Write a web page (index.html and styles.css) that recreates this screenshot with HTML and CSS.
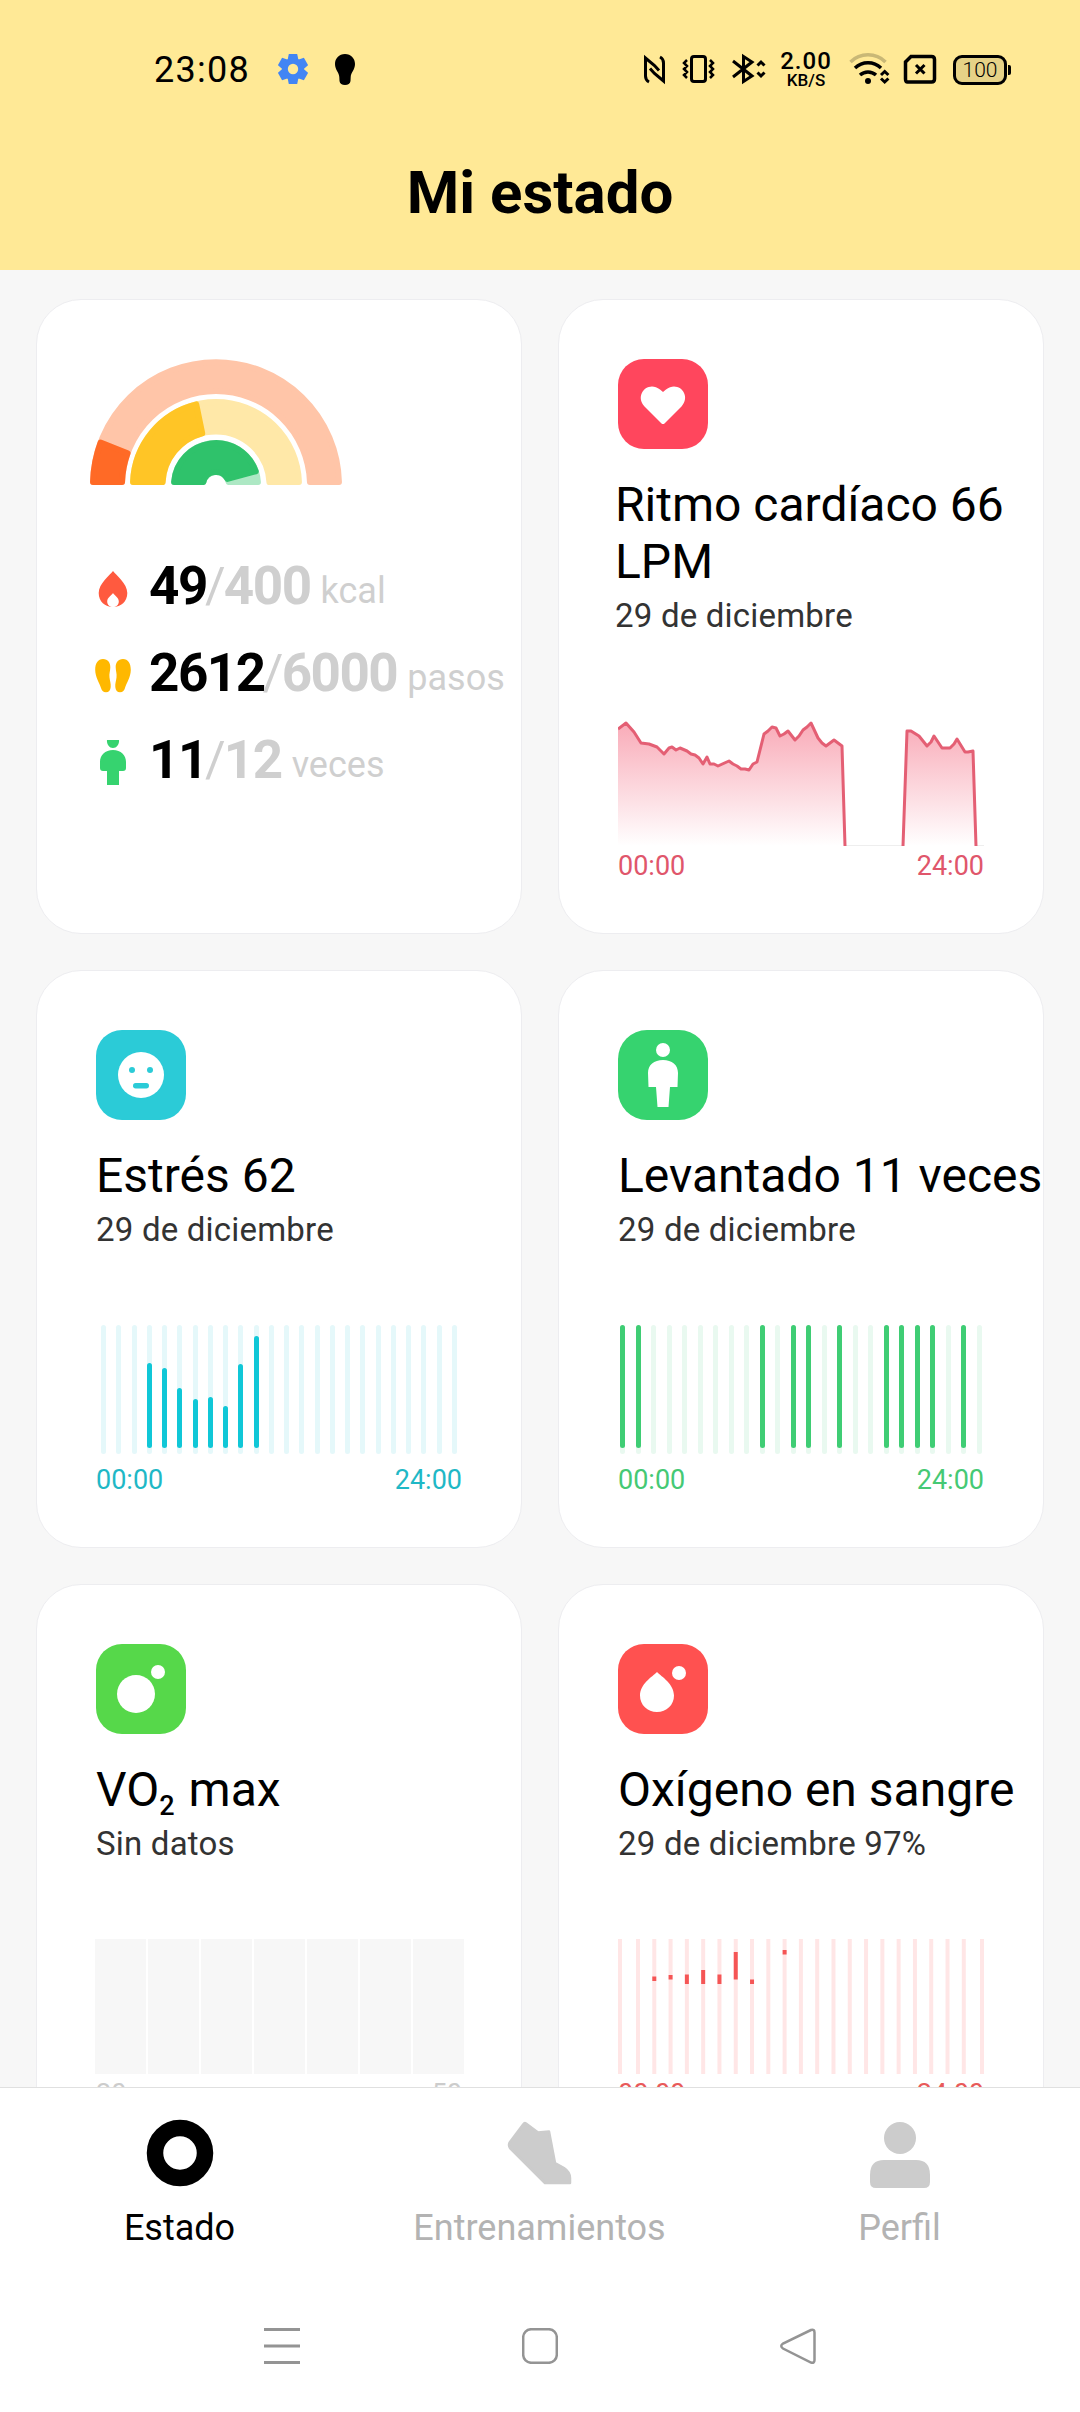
FILE: index.html
```
<!DOCTYPE html>
<html lang="es">
  <head>
    <meta charset="utf-8">
    <title>Mi estado</title>
    <link rel="stylesheet" href="styles.css">
  </head>
  <body>
    <div id="top">
      <div class="statusbar">
        <div class="status-left">
          <span class="clock">23:08</span>
          <svg class="gear" width="30" height="30" viewBox="-15 -15 30 30">
            <g fill="#4285f4">
              <circle r="11"/>
              <path id="tooth" d="M-4.2 -15h8.4l1.2 6h-10.8z"/>
              <use href="#tooth" transform="rotate(60)"/>
              <use href="#tooth" transform="rotate(120)"/>
              <use href="#tooth" transform="rotate(180)"/>
              <use href="#tooth" transform="rotate(240)"/>
              <use href="#tooth" transform="rotate(300)"/>
            </g>
            <circle r="5.2" fill="#ffe996"/>
          </svg>
          <svg width="20" height="31" viewBox="0 0 20 31"><path d="M10 0C4 0 0 4.500 0 10c0 6 4 8 4.300 13L4.500 27c.2 2.500 2.500 4 5.500 4s5.300-1.500 5.500-4l.2-4C16 18 20 16 20 10 20 4.500 16 0 10 0z"/></svg>
        </div>
        <div class="status-right">
          <svg width="38" height="40" viewBox="640 50 38 40" fill="none" stroke="#000" stroke-width="3">
            <path d="M649 82c-2-1-3.500-3-3.500-6V58l9 7.500 4.500 5M660 57c2 1 3.500 3 3.500 6v18l-9-7.500-4.500-5"/>
          </svg>
          <svg width="50" height="40" viewBox="678 50 50 40" fill="none" stroke="#000">
            <rect x="691.500" y="56.500" width="14" height="25" rx="2.500" stroke-width="3"/>
            <path d="M687 60l-3 3 3 3-3 3 3 3-3 3 3 3M710 60l3 3-3 3 3 3-3 3 3 3-3 3" stroke-width="2.500"/>
          </svg>
          <svg width="50" height="40" viewBox="728 50 50 40" fill="none" stroke="#000" stroke-width="3">
            <path d="M733 61l19 15-8.500 5.500v-25L752 62l-19 15"/>
            <path d="M757.500 65.500l3.500-3.500 3.500 3.500M757.500 72.500l3.500 3.500 3.500-3.500"/>
          </svg>
          <div class="speed"><span class="speed-num">2.00</span><span class="speed-unit">KB/S</span></div>
          <svg width="60" height="40" viewBox="836 50 60 40" fill="none" stroke="#000" stroke-width="3.500">
            <path d="M850.500 62a25 25 0 0 1 35 0" stroke="#c9b876"/>
            <path d="M855 68a19 19 0 0 1 26 0M860 75a12 12 0 0 1 16 0"/>
            <circle cx="868" cy="81" r="3" fill="#000" stroke="none"/>
            <path d="M881 75l3.700-3.500 3.700 3.500M881 78.500l3.700 3.500 3.700-3.500" stroke-width="3"/>
          </svg>
          <svg width="50" height="40" viewBox="896 50 50 40" fill="none" stroke="#000" stroke-width="3.500">
            <path d="M911 56.500h20.500q3 0 3 3v19.500q0 3-3 3h-24q-2 0-2-3V62z"/>
            <path d="M916 65l8.500 8.500M924.500 65l-8.500 8.500" stroke-width="3"/>
          </svg>
          <div class="battery">100</div>
          <div class="battery-tip"></div>
        </div>
      </div>
      <h1>Mi estado</h1>
    </div>

    <div id="content">
      <div class="card">
        <svg class="rainbow" width="252" height="126" viewBox="-126 -126 252 126">
          <g id="arcs"></g>
        </svg>
        <div class="stat">
          <svg width="36" height="45" viewBox="0 0 36 45"><path d="M18 5c3 4 14.300 12.500 14.300 22C32.300 35.500 26 41 18 41S3.700 35.500 3.700 27C3.700 17.500 15 9 18 5z" fill="#ff5a3f"/><path d="M18 27c1.500 2.500 5.800 4.500 5.800 8.500 0 3.500-2.500 5.500-5.800 5.500s-5.800-2-5.800-5.500c0-4 4.300-6 5.800-8.500z" fill="#fff"/></svg>
          <b>49</b><i>/</i><b class="goal">400</b><span>kcal</span>
        </div>
        <div class="stat">
          <svg width="36" height="45" viewBox="0 0 36 45" fill="#ffb800"><path id="foot" d="M8 6c5 0 7.500 4 7.300 8.500-.1 4-1.300 6-.8 10 .4 3.500 1.500 6 1.200 9.500-.3 3.500-2 5.300-4.700 5.300-3 0-4.200-1.800-5-4.300-1.500-5-5.800-11-5.800-18C.2 10 3 6 8 6z"/><use href="#foot" transform="matrix(-1 0 0 1 36 0)"/></svg>
          <b>2612</b><i>/</i><b class="goal">6000</b><span>pasos</span>
        </div>
        <div class="stat">
          <svg width="36" height="45" viewBox="0 0 36 45" fill="#36d36f"><path d="M12 0h12c.5 4-2 8-6 8s-6.500-4-6-8zM18 10c8 0 13 5 13 12v6q0 3-3 3h-4v14H12V31H8q-3 0-3-3v-6c0-7 5-12 13-12z"/></svg>
          <b>11</b><i>/</i><b class="goal">12</b><span>veces</span>
        </div>
      </div>

      <div class="card">
        <svg class="icon" width="90" height="90" viewBox="0 0 90 90"><rect width="90" height="90" rx="26" fill="#ff465d"/><path d="M43.500 64.500L26.500 47.500C16 36 30 21 42 30.500L45 33l3-2.500C60 21 74 36 63.500 47.500L46.500 64.500q-1.500 1.200-3 0z" fill="#fff"/></svg>
        <div class="shift">
          <h2>Ritmo cardíaco 66<br>LPM</h2>
          <p>29 de diciembre</p>
        </div>
        <svg class="chart" width="366" height="135" viewBox="0 0 366 135">
          <defs><linearGradient id="fade" x1="0" y1="0" x2="0" y2="1"><stop offset="0" stop-color="#f9abb8"/><stop offset="1" stop-color="#fff"/></linearGradient></defs>
          <path d="M226 134.500h140" stroke="#eee"/>
          <path fill="url(#fade)" d="M0 135V18L8 12 16 21 23 32 31 33 39 36 46 43 51 37 54 36 58 39 62 37 69 40 73 43 77 44 81 47 85 53 89 46 92 53 96 53 100 55 111 50 115 53 119 55 123 58 127 58 131 59 135 53 139 51 146 23 150 20 154 16 158 17 162 25 166 23 170 20 177 29 181 25 185 19 189 16 193 12 200 27 204 32 208 35 216 29 224 35 227 135zM285 135L289 20 293 20 301 25 309 35 313 31 316 25 324 37 332 37 336 33 339 28 347 41 350 41 355 40 358 135z"/>
          <path fill="none" stroke="#e45f74" stroke-width="3" stroke-linejoin="round" d="M0 18L8 12 16 21 23 32 31 33 39 36 46 43 51 37 54 36 58 39 62 37 69 40 73 43 77 44 81 47 85 53 89 46 92 53 96 53 100 55 111 50 115 53 119 55 123 58 127 58 131 59 135 53 139 51 146 23 150 20 154 16 158 17 162 25 166 23 170 20 177 29 181 25 185 19 189 16 193 12 200 27 204 32 208 35 216 29 224 35 227 135M285 135L289 20 293 20 301 25 309 35 313 31 316 25 324 37 332 37 336 33 339 28 347 41 350 41 355 40 358 135"/>
        </svg>
        <div class="hours pink"><span>00:00</span><span>24:00</span></div>
      </div>

      <div class="card">
        <svg class="icon" width="90" height="90" viewBox="0 0 90 90"><rect width="90" height="90" rx="26" fill="#2bcbd7"/><circle cx="45" cy="45" r="23" fill="#fff"/><g fill="#2bcbd7"><circle cx="36" cy="40" r="3"/><circle cx="54" cy="40" r="3"/><rect x="37" y="53" width="16" height="5.500" rx="2.700"/></g></svg>
        <h2>Estrés 62</h2>
        <p>29 de diciembre</p>
        <div class="chart bars stress" id="stress"></div>
        <div class="hours cyan"><span>00:00</span><span>24:00</span></div>
      </div>

      <div class="card">
        <svg class="icon" width="90" height="90" viewBox="0 0 90 90"><rect width="90" height="90" rx="29" fill="#36d36f"/><g fill="#fff"><circle cx="45" cy="20" r="7"/><path d="M45 30c9 0 15 5 15 13l-.5 14H52l-1.500 20h-11L38 57h-7.500L30 43c0-8 6-13 15-13z"/></g></svg>
        <h2>Levantado 11 veces</h2>
        <p>29 de diciembre</p>
        <div class="chart bars stand" id="stand"></div>
        <div class="hours green"><span>00:00</span><span>24:00</span></div>
      </div>

      <div class="card">
        <svg class="icon" width="90" height="90" viewBox="0 0 90 90"><rect width="90" height="90" rx="26" fill="#56d84a"/><circle cx="40" cy="50" r="19" fill="#fff"/><circle cx="62" cy="28" r="7" fill="#fff"/></svg>
        <h2>VO<sub>2</sub> max</h2>
        <p>Sin datos</p>
        <div class="chart blocks"><div></div><div></div><div></div><div></div><div></div><div></div><div></div></div>
        <div class="hours gray"><span>20</span><span>50</span></div>
      </div>

      <div class="card">
        <svg class="icon" width="90" height="90" viewBox="0 0 90 90"><rect width="90" height="90" rx="26" fill="#ff5150"/><path d="M39 28c5 5 17 12 17 23.500C56 61 48.500 68 39 68s-17-7-17-16.500C22 40 34 33 39 28z" fill="#fff"/><circle cx="61" cy="29" r="7" fill="#fff"/></svg>
        <h2>Oxígeno en sangre</h2>
        <p>29 de diciembre 97%</p>
        <svg class="chart" width="366" height="135" id="oxygen"></svg>
        <div class="hours red"><span>00:00</span><span>24:00</span></div>
      </div>
    </div>

    <div id="tabs">
      <div class="tab active">
        <svg width="72" height="72" viewBox="0 0 72 72"><circle cx="36" cy="36" r="25" fill="none" stroke="#000" stroke-width="16.500"/></svg>
        <span>Estado</span>
      </div>
      <div class="tab">
        <svg width="72" height="72" viewBox="0 0 72 72"><path d="M22 6.500L34 15.500 45 14.500 51 46 60 51Q66 55 66 61V66H41L6 31Q4 28 6 25L19.500 7Q20.500 5.500 22 6.500z" fill="#ccc" stroke="#ccc" stroke-width="2.500" stroke-linejoin="round"/></svg>
        <span>Entrenamientos</span>
      </div>
      <div class="tab">
        <svg width="72" height="72" viewBox="0 0 72 72" fill="#ccc"><circle cx="36" cy="21" r="16"/><path d="M20 43h32q14 0 14 15v7q0 6-6 6H12q-6 0-6-6v-7q0-15 14-15z"/></svg>
        <span>Perfil</span>
      </div>
    </div>

    <div id="sysnav">
      <svg width="36" height="36" viewBox="0 0 36 36" stroke="#949494" stroke-width="3"><path d="M0 1.500h36M0 18h36M0 34.500h36"/></svg>
      <svg width="36" height="36" viewBox="0 0 36 36" fill="none" stroke="#949494" stroke-width="2.500"><rect x="1.200" y="1.200" width="33.600" height="33.600" rx="8"/></svg>
      <svg width="36" height="36" viewBox="0 0 36 36" fill="none" stroke="#949494" stroke-width="2.500"><path d="M31 2L3 15.500Q-.5 18 3 20.500L31 34.500Q34.500 35.500 34.500 32V4.500Q34.500 1 31 2z"/></svg>
    </div>

    <script>
      function id(a) {
        return document.getElementById(a);
      }

      // Bar charts: one column per hour, 0 = nothing recorded
      function drawBars(el, data) {
        var out = '';
        for (let i = 0; i < data.length; i++) {
          out += '<div class="col">';
          if (data[i] > 0) {
            out += '<div class="val" style="height:' + data[i] + 'px"></div>';
          }
          out += '</div>';
        }
        id(el).innerHTML = out;
      }
      drawBars('stress', [0,0,0,85,80,60,49,51,42,84,112,0,0,0,0,0,0,0,0,0,0,0,0,0]);
      drawBars('stand', [123,123,0,0,0,0,0,0,0,123,0,123,123,0,123,0,0,123,123,123,123,0,123,0]);

      // Activity arcs: radius, percent done, track color, color done
      function point(r, deg) {
        var a = (180 - deg) * Math.PI / 180;
        return (r * Math.cos(a)).toFixed(2) + ' ' + (-r * Math.sin(a)).toFixed(2);
      }
      // band inset by 3, the 6px round stroke brings the soft corners back
      function band(r1, r2, a, b, color) {
        var o = r1 - 3, n = r2 + 3;
        var p1 = 180 / Math.PI * 3 / o, p2 = 180 / Math.PI * 3 / n;
        return '<path fill="' + color + '" stroke="' + color + '" stroke-width="6" stroke-linejoin="round" d="M' +
          point(o, a + p1) + 'A' + o + ' ' + o + ' 0 0 1 ' + point(o, b - p1) +
          'L' + point(n, b - p2) + 'A' + n + ' ' + n + ' 0 0 0 ' + point(n, a + p2) + 'z"/>';
      }
      function arc(r1, r2, done, track, color) {
        return band(r1, r2, 0, 180, track) + band(r1, r2, 0, 180 * done, color);
      }
      id('arcs').innerHTML =
        arc(126, 91, 0.12, '#ffc5a8', '#ff6a26') +
        arc(86, 50.5, 0.435, '#ffe8a8', '#ffc526') +
        arc(45, 10, 0.917, '#ade8c4', '#2fc26b');

      // Blood oxygen: grid line x, then the measured ranges
      var ox = '';
      for (let i = 0; i < 23; i++) {
        var x = i == 0 ? 0 : i == 22 ? 362 : 18 + (i - 1) * 16.29;
        ox += '<rect x="' + x + '" width="4" height="135" fill="#ffe6e6"/>';
      }
      var ranges = [[2,37.5,4.5],[3,36,4.5],[4,35.5,9.5],[5,31,14],[6,35.5,9.5],[7,13,27.5],[8,40.5,4.5],[10,11,4.5]];
      for (let r of ranges) {
        ox += '<rect x="' + (18 + (r[0] - 1) * 16.29) + '" y="' + r[1] + '" width="4" height="' + r[2] + '" fill="#f55555"/>';
      }
      id('oxygen').innerHTML = ox;
    </script>
  </body>
</html>
```

FILE: styles.css
```
* {box-sizing: border-box;}
body {margin: 0; width: 1080px; height: 2412px; overflow: hidden; display: flex; flex-direction: column; font-family: Roboto, "Liberation Sans", sans-serif; background-color: #f7f7f7; color: #000;}
svg {display: block; flex: none;}
h1, h2, p {margin: 0; font-weight: 400;}

#top {height: 270px; flex: none; background-color: #ffe996;}
.statusbar {height: 140px; padding: 0 69px 0 154px; display: flex; justify-content: space-between;}
.status-left {display: flex; align-items: center; height: 138px;}
.clock {font-size: 36px; letter-spacing: 1.3px; width: 124px; padding-top: 2px;}
.gear {margin-right: 27px;}
.status-right {display: flex; align-items: center; height: 40px; margin-top: 50px;}
.speed {width: 58px; padding-right: 2px; display: flex; flex-direction: column; align-items: center; font-weight: 500;}
.speed-num {font-size: 24px; line-height: 21px; letter-spacing: 1px;}
.speed-unit {font-size: 17px; line-height: 17px;}
.battery {width: 54px; height: 30px; margin-left: 7px; border: 3px solid #000; border-radius: 9px; background-color: #e6d287; font-size: 21px; line-height: 25px; text-align: center; font-weight: 300;}
.battery-tip {width: 3px; height: 10px; margin-left: 1px; background-color: #000; border-radius: 0 2px 2px 0;}
h1 {text-align: center; font-size: 60px; font-weight: 700; line-height: 70px; margin-top: 18px;}

#content {flex: 1; min-height: 0; overflow: hidden; padding: 29px 36px 0; display: grid; grid-template-columns: 486px 486px; gap: 36px; align-content: start;}
.card {background-color: #fff; border: 1px solid #ededf0; border-radius: 45px; padding: 59px 0 51px 59px;}
.icon {margin-bottom: 27px;}
h2 {font-size: 48px; line-height: 57px; white-space: nowrap;}
h2 sub {font-size: 27px; font-weight: 500; line-height: 0; vertical-align: -9px; letter-spacing: 2px;}
p {font-size: 33px; line-height: 39px; margin-top: 6px; letter-spacing: 0.2px; color: #333; white-space: nowrap;}
.shift {margin-left: -3px;}
.chart {margin-top: 76px; width: 366px; height: 135px;}
.hours {display: flex; justify-content: space-between; width: 366px; margin-top: 5px; font-size: 27px; line-height: 31px;}
.pink {color: #e0566b;}
.cyan {color: #1fb8c6;}
.green {color: #45c974;}
.gray {color: #ccc;}
.red {color: #e85a5a;}

.rainbow {margin: 0 0 81px -6px;}
.stat {display: flex; align-items: center; height: 45px; margin-bottom: 42px; margin-left: -1px; color: #cfcfcf;}
.stat b {font-size: 53px; line-height: 45px; font-weight: 700; letter-spacing: -1.5px; margin-top: -5px; color: #000;}
.stat svg + b {margin-left: 18px;}
.stat .goal {color: #cfcfcf;}
.stat i {font-style: normal; font-size: 50px; line-height: 45px; margin-top: -5px; width: 17px; display: flex; justify-content: center; font-weight: 400;}
.stat span {font-size: 36px; margin: 4px 0 0 10px;}

.bars {height: 129px; margin-bottom: 11px; display: flex; justify-content: space-between;}
.stress {padding: 0 5px;}
.stand {padding: 0 2px;}
.col {width: 5px; height: 129px; border-radius: 3px; display: flex; align-items: flex-end; padding-bottom: 6px;}
.val {width: 5px; border-radius: 3px;}
.stress .col {background-color: #e5f8fa;}
.stress .val {background-color: #10c7d7;}
.stand .col {background-color: #e9f9f0;}
.stand .val {background-color: #3fcd74;}
.blocks {display: flex; gap: 2px; width: 369px; margin-left: -1px;}
.blocks div {flex: 1; background-color: #f7f7f7;}

#tabs {height: 193px; flex: none; border-top: 1px solid #e0e0e0; background-color: #fff; display: flex;}
.tab {flex: 1; display: flex; flex-direction: column; align-items: center; padding-top: 29px; font-size: 36px; line-height: 42px; color: #b3b3b3;}
.tab span {margin: 18px 1px 0 0;}
.active {color: #000;}
#sysnav {height: 132px; flex: none; background-color: #fff; display: flex; justify-content: space-between; align-items: center; padding: 0 264px;}
```
